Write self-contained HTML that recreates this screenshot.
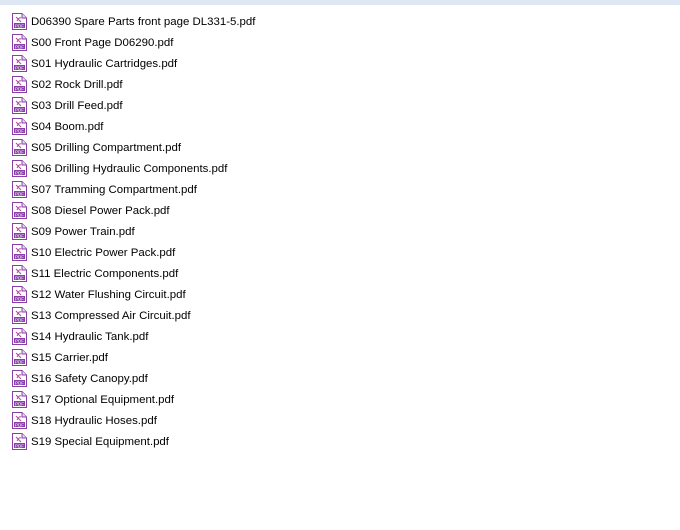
<!DOCTYPE html><html><head><style>
body{margin:0;width:680px;height:530px;background:#fff;position:relative;overflow:hidden;font-family:"Liberation Sans",sans-serif;font-size:11.45px;color:#000}
.top{position:absolute;left:0;top:0;width:680px;height:5px;background:#dde8f4}
.r{position:absolute;left:12px;height:21px;line-height:21px;white-space:nowrap}
.r svg{position:absolute;left:0;top:2px}
.r span{position:absolute;left:19px;top:0}
</style></head><body><div class="top"></div>
<div id="l"></div>
<script>
var n=["D06390 Spare Parts front page DL331-5.pdf","S00 Front Page D06290.pdf","S01 Hydraulic Cartridges.pdf","S02 Rock Drill.pdf","S03 Drill Feed.pdf","S04 Boom.pdf","S05 Drilling Compartment.pdf","S06 Drilling Hydraulic Components.pdf","S07 Tramming Compartment.pdf","S08 Diesel Power Pack.pdf","S09 Power Train.pdf","S10 Electric Power Pack.pdf","S11 Electric Components.pdf","S12 Water Flushing Circuit.pdf","S13 Compressed Air Circuit.pdf","S14 Hydraulic Tank.pdf","S15 Carrier.pdf","S16 Safety Canopy.pdf","S17 Optional Equipment.pdf","S18 Hydraulic Hoses.pdf","S19 Special Equipment.pdf"];
var h="";n.forEach(function(t,i){h+='<div class="r" style="top:'+(11+i*21)+'px"><svg width="15" height="17" viewBox="0 0 15 17"><path d="M0.5 0.5H10L14.5 5V16.5H0.5Z" fill="#fff" stroke="#8a3fa8"/><path d="M10 0.5V5H14.5" fill="#e8d8f0" stroke="#8a3fa8"/><path d="M4 4L9 9M5 8Q7 4 9 5" stroke="#b04a9c" fill="none"/><rect x="2" y="10" width="11" height="5" fill="#8a3fa8"/><text x="7.5" y="14.3" font-size="4.5" fill="#fff" text-anchor="middle" font-family="Liberation Sans">PDF</text></svg><span style="top:1px">'+t+'</span></div>'});
document.getElementById("l").innerHTML=h;
</script></body></html>
